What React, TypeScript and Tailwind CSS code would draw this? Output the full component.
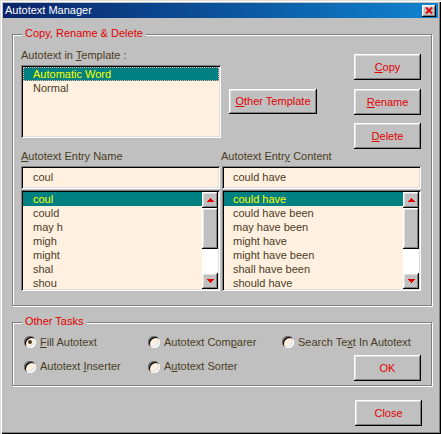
import React from "react";

const raised =
  "shadow-[inset_-1px_-1px_0_#000,inset_1px_1px_0_#fff,inset_-2px_-2px_0_#808080,inset_2px_2px_0_#dfdfdf]";
const sunken =
  "shadow-[inset_1px_1px_0_#808080,inset_-1px_-1px_0_#fff,inset_2px_2px_0_#000,inset_-2px_-2px_0_#dfdfdf]";
const etched = "border border-[#808080] shadow-[inset_1px_1px_0_#fff,1px_1px_0_#fff]";

function U({ children }: { children: React.ReactNode }) {
  return <span className="underline underline-offset-[1px]">{children}</span>;
}

function Button({ children, className = "" }: { children: React.ReactNode; className?: string }) {
  return (
    <div className={`flex items-center justify-center bg-[#c0c0c0] text-[#e00000] ${raised} ${className}`}>
      <span className="leading-[13px]">{children}</span>
    </div>
  );
}

function Arrow({ down = false }: { down?: boolean }) {
  return (
    <svg width="7" height="4" viewBox="0 0 7 4" shapeRendering="crispEdges">
      <polygon points={down ? "0,0 7,0 3.5,4" : "3.5,0 7,4 0,4"} fill="#e00000" />
    </svg>
  );
}

function ScrollBar() {
  return (
    <div className="flex w-[16px] flex-col bg-white">
      <div className={`flex h-[16px] items-center justify-center bg-[#c0c0c0] ${raised}`}>
        <Arrow />
      </div>
      <div className={`h-[41px] bg-[#c0c0c0] ${raised}`} />
      <div className="flex-1" />
      <div className={`flex h-[16px] items-center justify-center bg-[#c0c0c0] ${raised}`}>
        <Arrow down />
      </div>
    </div>
  );
}

function ListBox({ items, pad }: { items: string[]; pad: string }) {
  return (
    <div className={`mt-[1px] flex h-[101px] bg-[#fff0e0] p-[2px] ${sunken}`}>
      <div className="flex-1 overflow-hidden">
        {items.map((t, i) => (
          <div
            key={t}
            className={`h-[14px] whitespace-nowrap leading-[14px] ${pad} ${i === 0 ? "bg-[#008080] text-[#ffff00]" : ""}`}
          >
            {t}
          </div>
        ))}
      </div>
      <ScrollBar />
    </div>
  );
}

function Radio({ checked = false, children }: { checked?: boolean; children: React.ReactNode }) {
  return (
    <div className="flex items-center">
      <div
        className={`flex h-[12px] w-[12px] items-center justify-center rounded-full bg-[#fff0e0] shadow-[inset_1px_1px_0_#808080,inset_-1px_-1px_0_#fff,inset_2px_2px_0_#000,inset_-2px_-2px_0_#dfdfdf]`}
      >
        {checked && <div className="h-[4px] w-[4px] rounded-full bg-[#4a3c1e]" />}
      </div>
      <span className="ml-[4px] whitespace-nowrap leading-[13px]">{children}</span>
    </div>
  );
}

export default function App() {
  const names = ["coul", "could", "may h", "migh", "might", "shal", "shou"];
  const contents = [
    "could have",
    "could have been",
    "may have been",
    "might have",
    "might have been",
    "shall have been",
    "should have",
  ];

  return (
    <div
      className={`h-[434px] w-[441px] bg-[#c0c0c0] px-[3px] pt-[3px] font-['Liberation_Sans',Arial,sans-serif] text-[11px] text-[#4a3c1e] shadow-[inset_1px_1px_0_#dfdfdf,inset_2px_2px_0_#fff,inset_-1px_-1px_0_#000,inset_-2px_-2px_0_#808080]`}
    >
      {/* title bar */}
      <div className="flex h-[15px] items-center justify-between bg-gradient-to-r from-[#0a246a] to-[#1084d0] pl-[2px] pr-[2px]">
        <span className="leading-[13px] text-white">Autotext Manager</span>
        <div className={`flex h-[12px] w-[14px] items-center justify-center bg-[#c0c0c0] ${raised}`}>
          <svg width="8" height="7" viewBox="0 0 8 7">
            <path d="M1 0.5 L7 6.5 M7 0.5 L1 6.5" stroke="#e00000" strokeWidth="1.8" />
          </svg>
        </div>
      </div>

      {/* copy rename delete */}
      <div className={`relative ml-[9px] mt-[16px] h-[272px] w-[420px] pl-[8px] pt-[14px] ${etched}`}>
        <span className="absolute -top-[8px] left-[9px] bg-[#c0c0c0] px-[3px] leading-[13px] text-[#e00000]">
          Copy, Rename &amp; Delete
        </span>

        <div className="flex items-start">
          <div className="w-[200px]">
            <div className="h-[13px] leading-[13px]">
              Autotext in <U>T</U>emplate :
            </div>
            <div className={`mt-[3px] h-[73px] bg-[#fff0e0] p-[2px] ${sunken}`}>
              <div className="h-[14px] border border-dotted border-[#ffb0a0] bg-[#008080] pl-[9px] leading-[12px] text-[#ffff00]">
                Automatic Word
              </div>
              <div className="h-[14px] pl-[10px] leading-[14px]">Normal</div>
            </div>
          </div>
          <Button className="ml-[8px] mt-[40px] h-[25px] w-[88px]">
            <U>O</U>ther Template
          </Button>
          <div className="ml-[37px] mt-[5px] flex flex-col">
            <Button className="h-[26px] w-[67px]">
              <U>C</U>opy
            </Button>
            <Button className="mt-[9px] h-[26px] w-[67px]">
              <U>R</U>ename
            </Button>
            <Button className="mt-[8px] h-[26px] w-[67px]">
              <U>D</U>elete
            </Button>
          </div>
        </div>

        <div className="mt-[1px] flex gap-[2px]">
          <div className="w-[199px]">
            <div className="h-[13px] leading-[13px]">
              <U>A</U>utotext Entry Name
            </div>
            <div className={`mt-[3px] flex h-[23px] items-center bg-[#fff0e0] pl-[12px] ${sunken}`}>coul</div>
            <ListBox items={names} pad="pl-[10px]" />
          </div>
          <div className="w-[199px]">
            <div className="-ml-[1px] h-[13px] leading-[13px]">
              Autotext Entr<U>y</U> Content
            </div>
            <div className={`mt-[3px] flex h-[23px] items-center bg-[#fff0e0] pl-[11px] ${sunken}`}>could have</div>
            <ListBox items={contents} pad="pl-[9px]" />
          </div>
        </div>
      </div>

      {/* other tasks */}
      <div className={`relative ml-[9px] mt-[16px] h-[64px] w-[420px] pl-[11px] pr-[10px] pt-[13px] ${etched}`}>
        <span className="absolute -top-[8px] left-[9px] bg-[#c0c0c0] px-[3px] leading-[13px] text-[#e00000]">
          Other Tasks
        </span>
        <div className="flex h-[12px] items-center">
          <div className="w-[124px]">
            <Radio checked>
              <U>F</U>ill Autotext
            </Radio>
          </div>
          <div className="w-[134px]">
            <Radio>
              Autotext Com<U>p</U>arer
            </Radio>
          </div>
          <Radio>
            Search Te<U>x</U>t In Autotext
          </Radio>
        </div>
        <div className="mt-[7px] flex items-start">
          <div className="mt-[5px] w-[124px]">
            <Radio>
              Autotext <U>I</U>nserter
            </Radio>
          </div>
          <div className="mt-[5px] w-[134px]">
            <Radio>
              A<U>u</U>totext Sorter
            </Radio>
          </div>
          <Button className="ml-auto h-[26px] w-[67px]">OK</Button>
        </div>
      </div>

      <div className="flex justify-end pr-[16px]">
        <Button className="mt-[14px] h-[26px] w-[67px]">Close</Button>
      </div>
    </div>
  );
}
